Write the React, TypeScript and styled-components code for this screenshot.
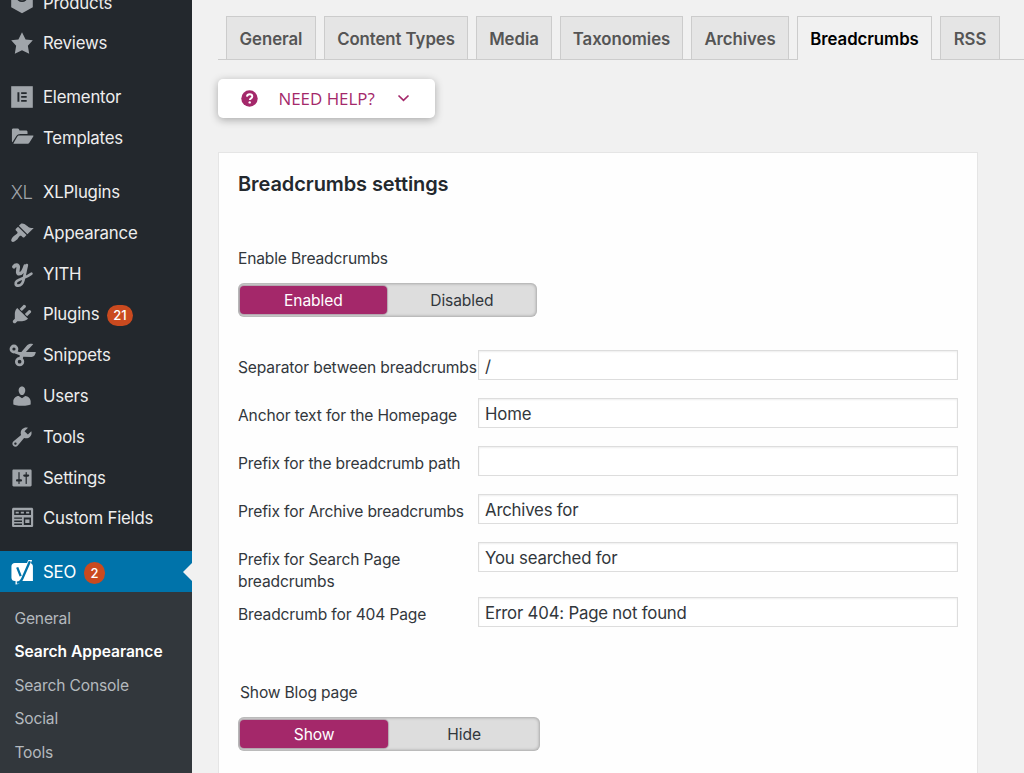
import React from "react";
import styled, { createGlobalStyle, css } from "styled-components";

const GlobalStyle = createGlobalStyle`
  * { box-sizing: border-box; }
  body {
    margin: 0;
    background: #f1f1f1;
    font-family: Inter, "Liberation Sans", sans-serif;
    color: #32373c;
    overflow: hidden;
  }
`;

const Page = styled.div`
  display: flex;
  height: 773px;
  overflow: hidden;
`;

const Sidebar = styled.nav`
  flex: 0 0 192px;
  height: 773px;
  background: #23282d;
  overflow: hidden;
`;

const MenuList = styled.div`
  display: flex;
  flex-direction: column;
  margin-top: -17.9px;
`;

const MenuItem = styled.a<{ $active?: boolean; $gap?: number }>`
  display: flex;
  align-items: center;
  height: 40.8px;
  flex: none;
  margin-top: ${(p) => p.$gap ?? 0}px;
  padding-left: 9.6px;
  color: ${(p) => (p.$active ? "#fff" : "#eee")};
  background: ${(p) => (p.$active ? "#0073aa" : "transparent")};
  font-size: 16.8px;
`;

const IconBox = styled.span<{ $active?: boolean }>`
  display: flex;
  align-items: center;
  justify-content: center;
  width: 24px;
  height: 24px;
  margin-right: 9.4px;
  flex: none;
  color: ${(p) => (p.$active ? "#fff" : "#a0a5aa")};
  svg { display: block; overflow: visible; }
`;

const TextIcon = styled.span`
  font-size: 18.5px;
  font-weight: 300;
  letter-spacing: -0.6px;
`;

const MenuLabel = styled.span`
  letter-spacing: -0.2px;
  white-space: nowrap;
`;

const Badge = styled.span<{ $wide?: boolean }>`
  display: flex;
  align-items: center;
  justify-content: center;
  width: ${(p) => (p.$wide ? 26 : 21.6)}px;
  height: 21.6px;
  margin: 2px 0 0 7.6px;
  border-radius: 11px;
  background: #ca4a1f;
  color: #fff;
  font-size: 13px;
  font-weight: 500;
`;

const Pointer = styled.span`
  margin-left: auto;
  border: 9.6px solid transparent;
  border-left-width: 0;
  border-right-color: #f1f1f1;
`;

const SubMenu = styled.div`
  display: flex;
  flex-direction: column;
  padding: 9.2px 0 20px 14.4px;
  background: #32373c;
`;

const SubItem = styled.a<{ $current?: boolean }>`
  display: flex;
  align-items: center;
  height: 33.5px;
  flex: none;
  font-size: 15.6px;
  letter-spacing: -0.15px;
  color: #b4b9be;
  ${(p) =>
    p.$current &&
    css`
      color: #fff;
      font-weight: 600;
      letter-spacing: -0.04px;
    `}
`;

const Main = styled.main`
  flex: 1;
  min-width: 0;
  padding: 16px 0 0 26px;
`;

const Tabs = styled.div`
  display: flex;
  gap: 8px;
  height: 44px;
  padding-left: 8px;
  border-bottom: 1px solid #ccc;
`;

const Tab = styled.a<{ $width: number; $active?: boolean }>`
  display: flex;
  align-items: center;
  justify-content: center;
  width: ${(p) => p.$width}px;
  height: ${(p) => (p.$active ? 44 : 43)}px;
  flex: none;
  padding-top: ${(p) => (p.$active ? 0 : 1)}px;
  border: 1px solid #ccc;
  border-bottom: none;
  background: ${(p) => (p.$active ? "#f1f1f1" : "#e5e5e5")};
  color: ${(p) => (p.$active ? "#000" : "#555")};
  font-size: 16.8px;
  font-weight: 600;
  letter-spacing: -0.06px;
  white-space: nowrap;
`;

const HelpButton = styled.button`
  display: flex;
  align-items: center;
  width: 217px;
  height: 39px;
  margin-top: 19px;
  padding: 0 0 1px 23px;
  border: 0;
  border-radius: 5px;
  background: #fff;
  box-shadow: 0 2px 8px rgba(0, 0, 0, 0.3);
  color: #a4286a;
  font: 400 16.9px "Open Sans", sans-serif;
`;

const HelpText = styled.span`
  margin: 0 22px 0 20.5px;
  white-space: nowrap;
`;

const Card = styled.section`
  width: 760px;
  height: 660px;
  margin-top: 34px;
  padding: 19px 19px 0;
  border: 1px solid #e5e5e5;
  background: #fefefe;
`;

const Title = styled.h2`
  margin: 0;
  font-size: 20px;
  line-height: 25px;
  font-weight: 600;
  letter-spacing: -0.09px;
  color: #23282d;
`;

const Legend = styled.div<{ $top: number; $indent?: number }>`
  margin: ${(p) => p.$top}px 0 0 ${(p) => p.$indent ?? 0}px;
  font-size: 15.6px;
  line-height: 22px;
  letter-spacing: -0.17px;
`;

const Switch = styled.div<{ $width: number }>`
  display: flex;
  width: ${(p) => p.$width}px;
  height: 34px;
  margin-top: 13px;
  padding: 3px 0 3px 2px;
  border-radius: 6px;
  background: #ddd;
  box-shadow: inset 0 0 3px 1px rgba(0, 0, 0, 0.24);
`;

const Option = styled.span<{ $on?: boolean }>`
  display: flex;
  flex: 1;
  align-items: center;
  justify-content: center;
  border-radius: 4px;
  font-size: 15.6px;
  letter-spacing: -0.1px;
  ${(p) =>
    p.$on &&
    css`
      flex: 0 0 49.4%;
      background: #a4286a;
      color: #fff;
      box-shadow: 0 0 1px 1px rgba(110, 70, 95, 0.35);
    `}
`;

const Fields = styled.div`
  display: flex;
  flex-direction: column;
  margin-top: 33px;
`;

const Field = styled.div<{ $height: number }>`
  display: flex;
  height: ${(p) => p.$height}px;
`;

const FieldLabel = styled.label`
  width: 240px;
  flex: none;
  padding-top: 7px;
  font-size: 15.6px;
  line-height: 21.6px;
  letter-spacing: -0.15px;
  white-space: pre;
`;

const Input = styled.input`
  width: 480px;
  height: 30px;
  padding: 1px 6px 0;
  border: 1px solid #ddd;
  border-radius: 0;
  outline: 0;
  background: #fff;
  box-shadow: inset 0 1px 2px rgba(0, 0, 0, 0.07);
  color: #32373c;
  font: 400 16.8px Inter, "Liberation Sans", sans-serif;
  letter-spacing: -0.2px;
`;

const Svg = ({ children }: { children: React.ReactNode }) => (
  <svg width="24" height="24" viewBox="0 0 20 20" fill="currentColor">
    {children}
  </svg>
);

const icons: Record<string, React.ReactNode> = {
  products: (
    <Svg>
      <path d="M1 2h18v11.6L10 18.6 1 13.6z" />
      <path d="M6 4.500a4 4 0 0 0 8 0" fill="none" stroke="#23282d" strokeWidth="1.500" />
    </Svg>
  ),
  star: (
    <Svg>
      <path d="M10 1l3 6 6 .75-4.12 4.62L16 19l-6-3-6 3 1.13-6.63L1 7.75 7 7z" />
    </Svg>
  ),
  elementor: (
    <Svg>
      <path d="M1 1h18v18H1z" />
      <path d="M6.2 6h1.6v8H6.2zM9.3 6h4.6v1.5H9.3zM9.3 9.2h4.6v1.5H9.3zM9.3 12.5h4.6V14H9.3z" fill="#23282d" />
    </Svg>
  ),
  templates: (
    <Svg>
      <path d="M1.6 3.2c0-.7.5-1.200 1.200-1.200h3.600c.6 0 1 .4 1.200.9l.3.9h5.400c.8 0 1.300.5 1.300 1.200v1.700H8.500c-1.300 0-2.500.6-3.200 1.700L2 13.600c-.3-.3-.4-.6-.4-1z" />
      <path d="M7.8 8h11.200c.5 0 .7.4.4.8l-3.300 5.200c-.4.600-.9.800-1.600.8H3.400c-.5 0-.7-.3-.4-.7L6 9c.4-.7 1-1 1.800-1z" />
    </Svg>
  ),
  appearance: (
    <Svg>
      <path d="M14.48 11.06L7.41 3.99l1.5-1.5c.5-.56 2.3-.47 3.51.32 1.21.8 1.43 1.28 2.91 2.1 1.18.64 2.45 1.26 4.45.85zm-.71.71L6.7 4.7 4.93 6.47c-.39.39-.39 1.02 0 1.41l1.06 1.06c.39.39.39 1.03 0 1.42-.6.6-1.43 1.11-2.21 1.69-.35.26-.7.53-1.01.84C1.43 14.23.4 16.08 1.4 17.07c.99 1 2.84-.03 4.18-1.36.31-.31.58-.66.85-1.02.57-.78 1.08-1.61 1.69-2.21.39-.39 1.02-.39 1.41 0l1.06 1.06c.39.39 1.02.39 1.41 0z" />
    </Svg>
  ),
  yith: (
    <Svg>
      <g fill="none" stroke="currentColor" strokeLinecap="round" strokeLinejoin="round">
        <path d="M3.200 4C4.400 2.200 7 2 6.900 4.300 6.700 6.500 5.600 9.800 7.600 9.800c2.200 0 4-3 5-6.300" strokeWidth="3" />
        <path d="M14 2.600C13 6.500 12.400 10.500 11.200 15.200c-.7 2.800-2.200 4.500-4.300 4.500-2.400 0-2.900-2.200-1.100-3.800C8.200 13.800 14 13 17.800 9.800" strokeWidth="2.300" />
      </g>
    </Svg>
  ),
  plugins: (
    <Svg>
      <path d="M13.11 4.36L9.87 7.6 8 5.73l3.24-3.24c.35-.34 1.05-.2 1.56.32.52.51.66 1.21.31 1.55zm-8 1.77l.91-1.12 9.01 9.01-1.19.84c-.71.71-2.63 1.16-3.82 1.16H6.14L4.9 17.26c-.59.59-1.54.59-2.12 0-.59-.58-.59-1.53 0-2.12l1.24-1.24v-3.88c0-1.13.4-3.19 1.09-3.89zm7.26 3.97l3.24-3.24c.34-.35 1.04-.21 1.55.31.52.51.66 1.21.31 1.55l-3.24 3.25z" />
    </Svg>
  ),
  snippets: (
    <Svg>
      <g fill="none" stroke="currentColor" strokeWidth="2.300">
        <circle cx="3.300" cy="5" r="2.500" />
        <circle cx="8" cy="15.600" r="2.700" />
      </g>
      <path d="M4.800 6l2.700 1.600 2-.2 4.600-5.400c1.300-1.300 3.600-1.700 5.200-1l-6 6.500h8.200c-.2 2.200-1.500 4-3.600 4.100l-6.800-.2-.9 3-2.500-.8.400-3.400-4-1.500z" />
    </Svg>
  ),
  users: (
    <Svg>
      <path d="M10 9.25c-2.27 0-2.73-3.44-2.73-3.44C7 4.02 7.82 2 9.97 2c2.16 0 2.98 2.02 2.71 3.81 0 0-.41 3.44-2.68 3.44zm0 2.57L12.72 10c2.39 0 4.52 2.33 4.52 4.53v2.49s-3.65 1.13-7.24 1.13c-3.65 0-7.24-1.13-7.24-1.13v-2.49c0-2.25 1.94-4.48 4.47-4.48z" />
    </Svg>
  ),
  tools: (
    <Svg>
      <path d="M16.68 9.77c-1.34 1.34-3.3 1.67-4.95.99l-5.41 6.52c-.99.99-2.59.99-3.58 0s-.99-2.59 0-3.57l6.52-5.42c-.68-1.65-.35-3.61.99-4.95 1.28-1.28 3.12-1.62 4.72-1.06l-2.89 2.89 2.82 2.82 2.86-2.87c.53 1.58.18 3.39-1.08 4.65zM3.81 16.21c.4.39 1.04.39 1.43 0 .4-.4.4-1.04 0-1.43-.39-.4-1.03-.4-1.43 0-.39.39-.39 1.03 0 1.43z" />
    </Svg>
  ),
  settings: (
    <Svg>
      <path d="M18 16V4c0-.55-.45-1-1-1H3c-.55 0-1 .45-1 1v12c0 .55.45 1 1 1h14c.55 0 1-.45 1-1zM8 11h1c.55 0 1 .45 1 1s-.45 1-1 1H8v1.500c0 .28-.22.5-.5.5s-.5-.22-.5-.5V13H6c-.55 0-1-.45-1-1s.45-1 1-1h1V5.500c0-.28.22-.5.5-.5s.5.22.5.5V11zm5-2h-1c-.55 0-1-.45-1-1s.45-1 1-1h1V5.500c0-.28.22-.5.5-.5s.5.22.5.5V7h1c.55 0 1 .45 1 1s-.45 1-1 1h-1v5.500c0 .28-.22.5-.5.5s-.5-.22-.5-.5V9z" />
    </Svg>
  ),
  fields: (
    <Svg>
      <path
        fillRule="evenodd"
        d="M3 1.500h15c.8 0 1.300.5 1.300 1.300v13.400c0 .8-.5 1.300-1.300 1.300H3c-.8 0-1.300-.5-1.300-1.300V2.800c0-.8.5-1.300 1.300-1.300zM3.500 3.500v4h14v-4zM3.500 9.500v1.200h6.500V9.500zM3.500 12v1.300h6.500V12zM3.500 14.600v1.200h6.500v-1.200zM11.500 9.500v6.300h6V9.500z"
      />
      <path d="M4.700 4.700h2.600v1.600H4.700zM9 4.700h2.600v1.600H9zM13.400 4.700H16v1.600h-2.600zM12.700 11.200h3.500v3h-3.500z" />
    </Svg>
  ),
  seo: (
    <Svg>
      <path d="M4 2.500h10.200L15.200 0h3.200L17.400 2.700c1 .4 1.700 1.300 1.700 2.500V17.500H9.200c-.9 1.800-2.300 2.900-4.600 3v-3H4c-1.600 0-2.800-1.200-2.800-2.800V5.300C1.200 3.700 2.400 2.500 4 2.500z" />
      <path d="M6 6.200l2.900 7.200M16.600 1L10.400 15.200c-.9 2.300-2.300 3.500-4.700 3.700" fill="none" stroke="#0073aa" strokeWidth="1.900" />
    </Svg>
  ),
};

const menu = [
  { icon: "products", label: "Products" },
  { icon: "star", label: "Reviews" },
  { icon: "elementor", label: "Elementor", gap: 13.2 },
  { icon: "templates", label: "Templates" },
  { icon: "xl", label: "XLPlugins", gap: 13.2 },
  { icon: "appearance", label: "Appearance" },
  { icon: "yith", label: "YITH" },
  { icon: "plugins", label: "Plugins", badge: "21" },
  { icon: "snippets", label: "Snippets" },
  { icon: "users", label: "Users" },
  { icon: "tools", label: "Tools" },
  { icon: "settings", label: "Settings" },
  { icon: "fields", label: "Custom Fields" },
  { icon: "seo", label: "SEO", gap: 12.5, badge: "2", active: true },
];

const tabs = [
  { label: "General", width: 90 },
  { label: "Content Types", width: 144 },
  { label: "Media", width: 76 },
  { label: "Taxonomies", width: 123 },
  { label: "Archives", width: 98 },
  { label: "Breadcrumbs", width: 135, active: true },
  { label: "RSS", width: 60 },
];

const fields = [
  { label: "Separator between breadcrumbs", value: "/", height: 48 },
  { label: "Anchor text for the Homepage", value: "Home", height: 48 },
  { label: "Prefix for the breadcrumb path", value: "", height: 48 },
  { label: "Prefix for Archive breadcrumbs", value: "Archives for", height: 48 },
  { label: "Prefix for Search Page\nbreadcrumbs", value: "You searched for", height: 55 },
  { label: "Breadcrumb for 404 Page", value: "Error 404: Page not found", height: 30 },
];

export default function App() {
  return (
    <Page>
      <GlobalStyle />
      <Sidebar>
        <MenuList>
          {menu.map((m) => (
            <MenuItem key={m.label} $gap={m.gap} $active={m.active}>
              <IconBox $active={m.active}>
                {m.icon === "xl" ? <TextIcon>XL</TextIcon> : icons[m.icon]}
              </IconBox>
              <MenuLabel>{m.label}</MenuLabel>
              {m.badge && <Badge $wide={m.badge.length > 1}>{m.badge}</Badge>}
              {m.active && <Pointer />}
            </MenuItem>
          ))}
          <SubMenu>
            {["General", "Search Appearance", "Search Console", "Social", "Tools"].map((s) => (
              <SubItem key={s} $current={s === "Search Appearance"}>
                {s}
              </SubItem>
            ))}
          </SubMenu>
        </MenuList>
      </Sidebar>
      <Main>
        <Tabs>
          {tabs.map((t) => (
            <Tab key={t.label} $width={t.width} $active={t.active}>
              {t.label}
            </Tab>
          ))}
        </Tabs>
        <HelpButton>
          <svg width="17" height="17" viewBox="0 0 17 17">
            <circle cx="8.500" cy="8.500" r="8.200" fill="#a4286a" />
            <path d="M5.900 6.700c.2-1.600 1.200-2.500 2.700-2.500 1.600 0 2.700.9 2.700 2.300 0 1.900-2.500 1.800-2.500 3.600" fill="none" stroke="#fff" strokeWidth="1.900" />
            <circle cx="8.700" cy="12.400" r="1.200" fill="#fff" />
          </svg>
          <HelpText>NEED HELP?</HelpText>
          <svg width="13" height="8" viewBox="0 0 13 8">
            <path d="M1.500 1.500l5 4.800 5-4.800" fill="none" stroke="#a4286a" strokeWidth="1.700" />
          </svg>
        </HelpButton>
        <Card>
          <Title>Breadcrumbs settings</Title>
          <Legend $top={51}>Enable Breadcrumbs</Legend>
          <Switch $width={299}>
            <Option $on>Enabled</Option>
            <Option>Disabled</Option>
          </Switch>
          <Fields>
            {fields.map((f) => (
              <Field key={f.label} $height={f.height}>
                <FieldLabel>{f.label}</FieldLabel>
                <Input defaultValue={f.value} />
              </Field>
            ))}
          </Fields>
          <Legend $top={55} $indent={2}>
            Show Blog page
          </Legend>
          <Switch $width={302}>
            <Option $on>Show</Option>
            <Option>Hide</Option>
          </Switch>
        </Card>
      </Main>
    </Page>
  );
}
